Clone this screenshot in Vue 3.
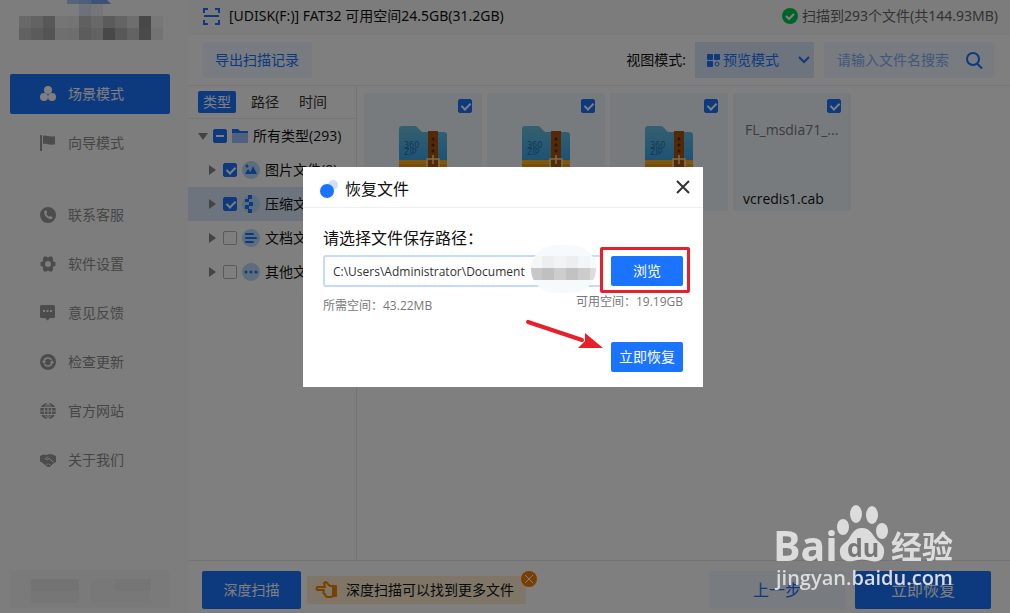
<template>
  <div class="app">
    <aside class="sidebar">
      <div class="brand">
        <svg width="160" height="56" viewBox="0 0 160 56">
          <rect x="57" y="0" width="12" height="4" fill="#adc8ee" />
          <rect x="69" y="0" width="12" height="4" fill="#9dbfef" />
          <path d="M81 0h16l4 4H81z" fill="#7aa5e8" />
          <rect x="69" y="4" width="12" height="12" fill="#d8e2f4" />
          <rect x="81" y="4" width="12" height="12" fill="#e8edf6" />
          <rect
            v-for="cell in brandCells"
            :key="cell.key"
            :x="cell.x"
            :y="cell.y"
            width="12"
            height="12"
            :fill="cell.color"
          />
        </svg>
      </div>

      <nav class="menu">
        <a
          v-for="item in menu"
          :key="item.label"
          href="#"
          class="menu-item"
          :class="{ active: item.active, spaced: item.spaced }"
        >
          <svg width="16" height="16" viewBox="0 0 16 16" fill="currentColor">
            <g v-if="item.icon === 'scene'">
              <circle cx="8" cy="4" r="4" />
              <circle cx="4" cy="11" r="4" />
              <circle cx="12" cy="11" r="4" />
            </g>
            <path v-else-if="item.icon === 'flag'" d="M0 0h2v16H0zM3 1c3-1.400 6 1.400 12 .2v8c-6 1.400-9-1.200-12 0z" />
            <path v-else-if="item.icon === 'phone'" fill-rule="evenodd" d="M8 0a8 8 0 1 1 0 16A8 8 0 0 1 8 0zM5.200 3.400C3.600 4.400 3.900 7.400 6 9.700c2.200 2.400 5 3.300 6.300 1.700.5-.6.3-1-.1-1.300l-1.400-.9c-.5-.3-.8-.1-1.200.4-.4.400-1.200 0-2.200-1-1-1.200-1.200-1.900-.8-2.300.5-.4.6-.7.4-1.200l-.6-1.500c-.2-.4-.6-.5-1.200-.2z" />
            <path v-else-if="item.icon === 'gear'" fill-rule="evenodd" d="M4.500.6c1-.8 1.700-.3 2.200.2.800.8 1.800.8 2.600 0 .5-.5 1.200-1 2.200-.2l1 .8c.9.700.7 1.400.4 2.100-.3 1 .2 1.900 1.200 2.200.9.2 1.400.7 1.400 1.600v1.400c0 .9-.5 1.400-1.400 1.600-1 .3-1.500 1.200-1.200 2.200.3.700.5 1.400-.4 2.100l-1 .8c-1 .8-1.700.3-2.200-.2-.8-.8-1.800-.8-2.600 0-.5.500-1.200 1-2.200.2l-1-.8c-.9-.7-.7-1.400-.4-2.100.3-1-.2-1.900-1.200-2.200C1 10.100.5 9.600.5 8.700V7.300c0-.9.500-1.400 1.400-1.600 1-.3 1.500-1.200 1.200-2.200-.3-.7-.5-1.400.4-2.100zM8 5a3 3 0 1 0 0 6 3 3 0 0 0 0-6z" />
            <path v-else-if="item.icon === 'chat'" fill-rule="evenodd" d="M1.500 0h12A1.500 1.500 0 0 1 15 1.500v10a1.500 1.500 0 0 1-1.500 1.500H10l-2.500 2.500L5 13H1.500A1.500 1.500 0 0 1 0 11.500v-10A1.500 1.500 0 0 1 1.500 0zM3 5v2h2V5zm3.500 0v2h2V5zM10 5v2h2V5z" />
            <g v-else-if="item.icon === 'update'">
              <circle cx="8" cy="8" r="8" />
              <path d="M4 8a4 4 0 0 1 7.500-2M12 8a4 4 0 0 1-7.500 2" fill="none" stroke="#fbfbfb" stroke-width="1.500" />
              <path d="M2 7h4l-2 3zM10 9h4l-2-3z" fill="#fbfbfb" />
            </g>
            <g v-else-if="item.icon === 'globe'">
              <circle cx="8" cy="8" r="8" />
              <path d="M0 4.500h16M0 8h16M0 11.500h16M8 0v16M8 0C3 4 3 12 8 16M8 0c5 4 5 12 0 16" fill="none" stroke="#fbfbfb" stroke-width="1" />
            </g>
            <g v-else>
              <path d="M0 4l3-1.500 4 .5 2-1 3.500.5L16 4v6l-2 1-4 3.500c-1 .8-2.400.6-3.400-.2L2 10.500 0 9.500z" />
              <path d="M8 4.500L5.500 7c1 1 2.500.5 3.500-.7l4.500 4M6.500 13l1.500-1.500M9 13l1-1" fill="none" stroke="#fbfbfb" stroke-width="1" />
            </g>
          </svg>
          <span>{{ item.label }}</span>
        </a>
      </nav>

      <div class="account">
        <svg width="160" height="38" viewBox="0 0 160 38">
          <rect width="160" height="38" fill="#f5f5f5" />
          <rect x="21" y="9" width="48" height="12" fill="#e6e6e6" />
          <rect x="21" y="21" width="48" height="12" fill="#ececec" />
          <rect x="81" y="9" width="24" height="24" fill="#f0f0f0" />
          <rect x="105" y="9" width="36" height="12" fill="#ebebeb" />
          <rect x="105" y="21" width="36" height="12" fill="#f0f0f0" />
        </svg>
      </div>
    </aside>

    <main class="main">
      <header class="topbar">
        <svg width="17" height="17" viewBox="0 0 17 17" fill="none" stroke="#1b74ff" stroke-width="2">
          <path d="M1 5V1h4M12 1h4v4M16 12v4h-4M5 16H1v-4M1 8h15" />
        </svg>
        <span class="disk">[UDISK(F:)] FAT32 可用空间24.5GB(31.2GB)</span>
        <svg width="16" height="16" viewBox="0 0 16 16">
          <circle cx="8" cy="8" r="8" fill="#00c853" />
          <path d="M4 8l3 3 5-5" fill="none" stroke="#fff" stroke-width="2" />
        </svg>
        <span class="scan-result">扫描到293个文件(共144.93MB)</span>
      </header>

      <div class="toolbar">
        <button type="button" class="btn-light">导出扫描记录</button>
        <label class="view-label" for="view-mode">视图模式:</label>
        <div class="view-box">
          <svg width="13" height="13" viewBox="0 0 13 13" fill="#1b74ff">
            <rect width="6" height="6" rx="1" />
            <rect x="7" width="6" height="6" rx="1" />
            <rect y="7" width="6" height="6" rx="1" />
            <circle cx="10" cy="10" r="2" fill="none" stroke="#1b74ff" />
          </svg>
          <select id="view-mode" v-model="viewMode">
            <option value="preview">预览模式</option>
          </select>
          <svg width="12" height="8" viewBox="0 0 12 8" fill="none" stroke="#1b74ff" stroke-width="2">
            <path d="M1 1l5 5 5-5" />
          </svg>
        </div>
        <div class="search-box">
          <input v-model="keyword" type="text" placeholder="请输入文件名搜索" aria-label="搜索文件" />
          <button type="button" class="btn-icon" aria-label="搜索">
            <svg width="17" height="17" viewBox="0 0 17 17" fill="none" stroke="#1b74ff" stroke-width="2">
              <circle cx="7" cy="7" r="6" />
              <path d="M11 11.500l5 5" />
            </svg>
          </button>
        </div>
      </div>

      <div class="content">
        <section class="tree">
          <div class="tabs">
            <button v-for="tab in tabs" :key="tab" type="button" class="tab" :class="{ active: tab === activeTab }" @click="activeTab = tab">
              {{ tab }}
            </button>
          </div>
          <label v-for="node in nodes" :key="node.label" class="node" :class="{ child: node.icon !== 'folder', selected: node.selected }">
            <span class="caret" :class="{ open: node.icon === 'folder' }"></span>
            <input v-model="node.checked" type="checkbox" class="check" :class="{ partial: node.partial }" />
            <svg v-if="node.icon === 'folder'" width="16" height="14" viewBox="0 0 16 14">
              <path d="M0 0h6l2 2h8v12H0z" fill="#1b74ff" />
              <path d="M0 4h16v10H0z" fill="#9cc4ff" />
            </svg>
            <svg v-else width="18" height="18" viewBox="0 0 18 18">
              <circle cx="9" cy="9" r="9" fill="#b9dafb" />
              <g v-if="node.icon === 'image'" fill="#1b74ff">
                <circle cx="5" cy="5" r="1.500" />
                <path d="M3 13l3-5 2.500 3L11 5l4 8z" />
              </g>
              <path v-else-if="node.icon === 'zip'" fill="#1b74ff" d="M6 0h4v4H6zM3 4h4v3H3zM7 7h4v4H7zM3 10h4v4H3zM6 14h4v4H6z" />
              <path v-else-if="node.icon === 'doc'" d="M4 5h7M4 9h10M4 13h7" stroke="#1b74ff" stroke-width="2" stroke-linecap="round" />
              <g v-else fill="#1b74ff">
                <circle cx="4" cy="9" r="1.500" />
                <circle cx="9" cy="9" r="1.500" />
                <circle cx="14" cy="9" r="1.500" />
              </g>
            </svg>
            <span>{{ node.label }}</span>
          </label>
        </section>

        <section class="files">
          <article v-for="file in files" :key="file.id" class="card">
            <input v-model="file.checked" type="checkbox" class="check" :aria-label="file.name || '文件'" />
            <svg v-if="file.zip" class="zip" width="48" height="49" viewBox="0 0 48 49">
              <defs>
                <linearGradient :id="'zip' + file.id" x1="0" y1="0" x2="0" y2="1">
                  <stop offset="0" stop-color="#6cbfdf" />
                  <stop offset="1" stop-color="#3aa6ea" />
                </linearGradient>
              </defs>
              <rect y="24" width="48" height="25" rx="3" fill="#f29a10" />
              <path d="M3 0h13c3 0 5 6 8 6h21a3 3 0 0 1 3 3v25H0V3a3 3 0 0 1 3-3z" :fill="'url(#zip' + file.id + ')'" />
              <path d="M0 34h48v4H0z" fill="#ffae1c" />
              <path d="M29 5h10v44H29z" fill="#a8520f" />
              <g fill="#5b2703">
                <circle cx="34" cy="13" r="1.500" />
                <circle cx="34" cy="19" r="1.500" />
                <circle cx="34" cy="25" r="1.500" />
              </g>
              <path d="M28 33h12v12H28zM34 29v9" fill="none" stroke="#ffd995" stroke-width="1.500" />
              <text x="5" y="22" class="zip-text">360</text>
              <text x="5" y="29" class="zip-text">ZIP</text>
            </svg>
            <template v-else>
              <p class="card-preview">{{ file.preview }}</p>
              <p class="card-name">{{ file.name }}</p>
            </template>
          </article>
        </section>
      </div>

      <footer class="footer">
        <button type="button" class="btn-primary deep">深度扫描</button>
        <div class="tip">
          <svg width="23" height="18" viewBox="0 0 23 18" fill="none" stroke="#f08200" stroke-width="2" stroke-linejoin="round">
            <path d="M18 5h-3l-4-4-2 1 1 4H3c-2 0-2 3 0 3h6c-1 2-1 4 1 4 0 2 1 3 3 3h3l2-1" />
            <path d="M18 5h3v10h-3z" fill="#f08200" />
          </svg>
          <span>深度扫描可以找到更多文件</span>
          <button type="button" class="tip-close" aria-label="关闭提示">
            <svg width="16" height="16" viewBox="0 0 16 16">
              <circle cx="8" cy="8" r="8" fill="#f57c00" />
              <path d="M4 4l8 8M12 4l-8 8" stroke="#fff" stroke-width="1" />
            </svg>
          </button>
        </div>
        <button type="button" class="btn-light prev">上一步</button>
        <button type="button" class="btn-primary recover">立即恢复</button>
      </footer>
    </main>

    <div class="overlay">
      <form class="dialog" role="dialog" aria-labelledby="dialog-title" @submit.prevent>
        <header class="dialog-header">
          <svg width="20" height="22" viewBox="0 0 20 22">
            <circle cx="14" cy="9" r="5" fill="#cfe1ff" />
            <circle cx="8" cy="15" r="7" fill="#1b74ff" />
          </svg>
          <h2 id="dialog-title">恢复文件</h2>
          <button type="button" class="btn-icon" aria-label="关闭">
            <svg width="14" height="14" viewBox="0 0 14 14" stroke="#333" stroke-width="2">
              <path d="M1 1l12 12M13 1L1 13" />
            </svg>
          </button>
        </header>
        <div class="dialog-body">
          <label for="save-path">请选择文件保存路径：</label>
          <div class="path-row">
            <input id="save-path" v-model="savePath" type="text" />
            <button type="button" class="btn-primary small">浏览</button>
            <svg class="mask" width="66" height="48" viewBox="0 0 66 48">
              <defs>
                <clipPath id="mask-shape"><rect width="65" height="48" rx="24" /></clipPath>
              </defs>
              <rect width="65" height="48" rx="24" fill="#f7fafd" />
              <g clip-path="url(#mask-shape)">
                <rect v-for="cell in maskCells" :key="cell.key" :x="cell.x" :y="cell.y" width="12" height="12" :fill="cell.color" />
              </g>
            </svg>
            <span class="highlight"></span>
          </div>
          <div class="space-row">
            <span class="need">所需空间：43.22MB</span>
            <span>可用空间：19.19GB</span>
          </div>
          <div class="submit-row">
            <svg class="arrow" width="78" height="36" viewBox="0 0 78 36">
              <path d="M3 4l54 18" stroke="#e8202a" stroke-width="4" stroke-linecap="round" />
              <path d="M78 30L60 15l0 8-7 7z" fill="#e8202a" />
            </svg>
            <button type="submit" class="btn-primary small">立即恢复</button>
          </div>
        </div>
      </form>
    </div>

    <svg class="watermark" width="184" height="92" viewBox="0 0 184 92" fill="#dcdcdc">
      <text x="-3" y="61" class="wm-name">Bai</text>
      <ellipse cx="67" cy="27" rx="6" ry="8" />
      <ellipse cx="80" cy="14" rx="6" ry="9" />
      <ellipse cx="96" cy="15" rx="6" ry="9" />
      <ellipse cx="106" cy="31" rx="6" ry="8" />
      <path d="M86 28c8 0 10 6 14 11 5 5 9 7 8 14-1 9-8 9-13 8-6-2-12-2-18 0-5 1-12 0-13-8-1-7 4-9 8-13 4-6 6-12 14-12z" />
      <text x="71" y="57" class="wm-du">du</text>
      <text x="115" y="58" class="wm-cn">经验</text>
      <text x="0" y="85" class="wm-url">jingyan.baidu.com</text>
    </svg>
  </div>
</template>

<script setup>
import { ref } from 'vue';

const menu = [
  { label: '场景模式', icon: 'scene', active: true },
  { label: '向导模式', icon: 'flag' },
  { label: '联系客服', icon: 'phone', spaced: true },
  { label: '软件设置', icon: 'gear' },
  { label: '意见反馈', icon: 'chat' },
  { label: '检查更新', icon: 'update' },
  { label: '官方网站', icon: 'globe' },
  { label: '关于我们', icon: 'hands' }
];

const tabs = ['类型', '路径', '时间'];
const activeTab = ref('类型');
const viewMode = ref('preview');
const keyword = ref('');
const savePath = ref('C:\\Users\\Administrator\\Document');

const nodes = ref([
  { label: '所有类型(293)', icon: 'folder', checked: true, partial: true },
  { label: '图片文件(9)', icon: 'image', checked: true },
  { label: '压缩文件', icon: 'zip', checked: true, selected: true },
  { label: '文档文件', icon: 'doc', checked: false },
  { label: '其他文件', icon: 'other', checked: false }
]);

const files = ref([
  { id: 1, zip: true, checked: true },
  { id: 2, zip: true, checked: true },
  { id: 3, zip: true, checked: true },
  { id: 4, checked: true, preview: 'FL_msdia71_...', name: 'vcredis1.cab' }
]);

// blocos do mosaico, uma linha por array
const toCells = (rows, left, top) =>
  rows.flatMap((row, r) =>
    row.map((color, c) => ({ key: `${r}-${c}`, x: left + c * 12, y: top + r * 12, color }))
  );

const brandCells = toCells([
  ['#d2d2d2', '#c6c6c6', '#b0b0b0', '#eaeaea', '#e8e8e8', '#c0c0c0', '#d0d0d0', '#b6b6b6', '#c8c8c8', '#dcdcdc', '#909090', '#eeeeee'],
  ['#c2c2c2', '#b6b6b6', '#a8a8a8', '#dedede', '#dcdcdc', '#b8b8b8', '#c4c4c4', '#909090', '#b0b0b0', '#c6c6c6', '#949494', '#e6e6e6']
], 9, 16);

const maskCells = toCells([
  ['#f4f6f8', '#eceef0', '#f1f3f5', '#eceef0', '#f3f6f9', '#f7fafd'],
  ['#c8c8c8', '#c0c0c0', '#cdcdcd', '#c2c2c2', '#cccccc', '#dcdcdc']
], -1, 11);
</script>

<style>
body {
  margin: 0;
}
</style>

<style scoped>
* {
  box-sizing: border-box;
}

.app {
  position: relative;
  display: flex;
  min-height: 100vh;
  overflow: hidden;
  background: #fff;
  color: #111;
  font-family: 'Open Sans', 'Noto Sans CJK SC', sans-serif;
  font-size: 14px;
  line-height: 20px;
}

button, input, select {
  font: inherit;
  color: inherit;
}

button {
  border: none;
  padding: 0;
  background: none;
  cursor: pointer;
}

svg {
  flex: none;
  display: block;
}

/* SIDEBAR */
.sidebar {
  display: flex;
  flex-direction: column;
  flex: none;
  width: 188px;
  padding: 0 18px 5px 10px;
  background: #fbfbfb;
}

.brand {
  height: 74px;
}

.menu {
  display: flex;
  flex-direction: column;
  gap: 9px;
  flex: 1;
}

.menu-item {
  display: flex;
  align-items: center;
  gap: 12px;
  height: 40px;
  padding-left: 30px;
  border-radius: 2px;
  color: #8c8c8c;
  text-decoration: none;
}

.menu-item svg {
  color: #999;
}

.menu-item.active {
  background: #1b74ff;
  color: #fff;
}

.menu-item.active svg {
  color: #fff;
}

.menu-item.spaced {
  margin-top: 23px;
}

/* MAIN */
.main {
  display: flex;
  flex-direction: column;
  flex: 1;
  min-width: 0;
}

.topbar {
  display: flex;
  align-items: center;
  height: 35px;
  padding: 0 12px 3px 15px;
  background: #f9f9f9;
  font-family: 'Noto Sans', 'Noto Sans CJK SC', sans-serif;
}

.disk {
  flex: 1;
  margin-left: 9px;
}

.scan-result {
  margin-left: 4px;
  color: #666;
}

.toolbar {
  display: flex;
  align-items: center;
  height: 51px;
  padding: 0 16px 0 14px;
  border-bottom: 1px solid #efefef;
}

.btn-light {
  height: 36px;
  padding: 0 13px;
  border-radius: 2px;
  background: #f0f6ff;
  color: #1b74ff;
}

.view-label {
  margin-left: auto;
  margin-right: 9px;
}

.view-box {
  display: flex;
  align-items: center;
  width: 119px;
  height: 36px;
  padding: 0 4px 0 12px;
  background: #dbe8fa;
}

.view-box select {
  flex: 1;
  min-width: 0;
  margin-left: 3px;
  padding: 0;
  border: none;
  background: none;
  color: #1b74ff;
  appearance: none;
}

.search-box {
  display: flex;
  align-items: center;
  width: 170px;
  height: 36px;
  margin-left: 10px;
  padding: 0 11px 0 13px;
  background: #f0f6ff;
}

.search-box input {
  flex: 1;
  min-width: 0;
  padding: 0;
  border: none;
  background: none;
  outline: none;
}

.search-box input::placeholder {
  color: #7fb0f8;
  opacity: 1;
}

.content {
  display: flex;
  flex: 1;
}

/* TREE */
.tree {
  flex: none;
  width: 169px;
  border-right: 1px solid #e8e8e8;
}

.tabs {
  display: flex;
  align-items: center;
  gap: 10px;
  height: 33px;
  padding-left: 10px;
  border-bottom: 1px solid #ececec;
}

.tab {
  height: 22px;
  padding: 0 5px;
  border-radius: 2px;
  color: #333;
}

.tab.active {
  background: #1b74ff;
  color: #fff;
}

.node {
  display: flex;
  align-items: center;
  gap: 5px;
  height: 34px;
  padding-left: 10px;
  white-space: nowrap;
  overflow: hidden;
}

.node.child {
  padding-left: 20px;
}

.node.selected {
  background: #dbe8fb;
}

.caret {
  flex: none;
  width: 10px;
  height: 10px;
  background: #888;
  clip-path: polygon(10% 0, 80% 50%, 10% 100%);
}

.caret.open {
  clip-path: polygon(0 20%, 100% 20%, 50% 90%);
}

.check {
  position: relative;
  flex: none;
  width: 14px;
  height: 14px;
  margin: 0;
  border: 1px solid #b4b4b4;
  border-radius: 2px;
  background: #fff;
  appearance: none;
}

.check:checked {
  border-color: #1b74ff;
  background: #1b74ff;
}

.check:checked::after {
  content: '';
  position: absolute;
  left: 4px;
  top: 1px;
  width: 4px;
  height: 7px;
  border: solid #fff;
  border-width: 0 2px 2px 0;
  transform: rotate(45deg);
}

.check.partial:checked::after {
  left: 2px;
  top: 5px;
  width: 8px;
  height: 2px;
  border: none;
  background: #fff;
  transform: none;
}

/* FILES */
.files {
  display: flex;
  flex-wrap: wrap;
  align-content: flex-start;
  gap: 5px;
  flex: 1;
  padding: 7px;
}

.card {
  display: flex;
  flex-direction: column;
  width: 118px;
  height: 118px;
  padding: 6px 10px 2px;
  border-radius: 2px;
  background: #f0f6fc;
}

.card .check {
  align-self: flex-end;
}

.zip {
  align-self: center;
  margin-top: 13px;
}

.zip-text {
  fill: #2270ac;
  font: 8px 'DejaVu Sans', sans-serif;
}

.card-preview {
  margin: 7px 0 0 2px;
  color: #777;
}

.card-name {
  margin: auto 0 0;
}

/* FOOTER */
.footer {
  display: flex;
  align-items: center;
  height: 53px;
  padding: 5px 19px 0 14px;
  border-top: 1px solid #e8e8e8;
}

.btn-primary {
  border-radius: 2px;
  background: #1b74ff;
  color: #fff;
}

.deep {
  width: 99px;
  height: 38px;
}

.tip {
  position: relative;
  display: flex;
  align-items: center;
  gap: 8px;
  height: 28px;
  margin-left: 6px;
  padding: 0 12px 0 8px;
  background: #ffedd0;
}

.tip-close {
  position: absolute;
  top: -5px;
  right: -11px;
}

.prev {
  width: 136px;
  height: 38px;
  margin-left: auto;
  font-size: 16px;
}

.recover {
  width: 136px;
  height: 38px;
  margin-left: 10px;
  font-size: 16px;
}

/* DIALOG */
.overlay {
  position: fixed;
  top: 0; left: 0;
  width: 100%; height: 100%;
  display: flex;
  justify-content: center;
  align-items: flex-start;
  padding: 167px 4px 0 0;
  background: rgba(0,0,0,0.5);
}

.dialog {
  width: 400px;
  background: #fff;
}

.dialog-header {
  display: flex;
  align-items: center;
  height: 41px;
  padding: 0 13px 0 16px;
  border-bottom: 1px solid #efefef;
}

.dialog-header h2 {
  flex: 1;
  margin: 0 0 0 6px;
  padding-top: 3px;
  font-size: 16px;
  font-weight: normal;
}

.dialog-body {
  padding: 20px 20px 15px;
}

.dialog-body label {
  display: block;
  font-size: 16px;
}

.path-row {
  position: relative;
  display: flex;
  align-items: center;
  gap: 8px;
  margin-top: 7px;
}

.path-row input {
  flex: 1;
  min-width: 0;
  height: 32px;
  padding: 0 8px;
  border: 2px solid #c3dbfb;
  border-radius: 3px;
  outline: none;
  background: #fff;
  color: #333;
  font-size: 12px;
}

.small {
  width: 72px;
  height: 30px;
}

.mask {
  position: absolute;
  left: 208px;
  top: -10px;
}

.highlight {
  position: absolute;
  top: -8px;
  right: -7px;
  width: 90px;
  height: 46px;
  border: 3px solid #e8202a;
  border-radius: 2px;
}

.space-row {
  display: flex;
  justify-content: space-between;
  margin-top: 5px;
  color: #777;
  font-size: 12px;
}

.need {
  margin-top: 4px;
}

.submit-row {
  position: relative;
  display: flex;
  justify-content: flex-end;
  margin-top: 26px;
}

.arrow {
  position: absolute;
  right: 80px;
  bottom: 18px;
}

/* WATERMARK */
.watermark {
  position: absolute;
  right: 50px;
  bottom: 21px;
  overflow: visible;
}

.wm-name {
  font: bold 41px 'Open Sans', sans-serif;
}

.wm-du {
  fill: #777;
  font: bold 25px 'Open Sans', sans-serif;
}

.wm-cn {
  font: bold 31px 'Noto Sans CJK SC', sans-serif;
}

.wm-url {
  font: 600 20px 'Open Sans', sans-serif;
}
</style>
